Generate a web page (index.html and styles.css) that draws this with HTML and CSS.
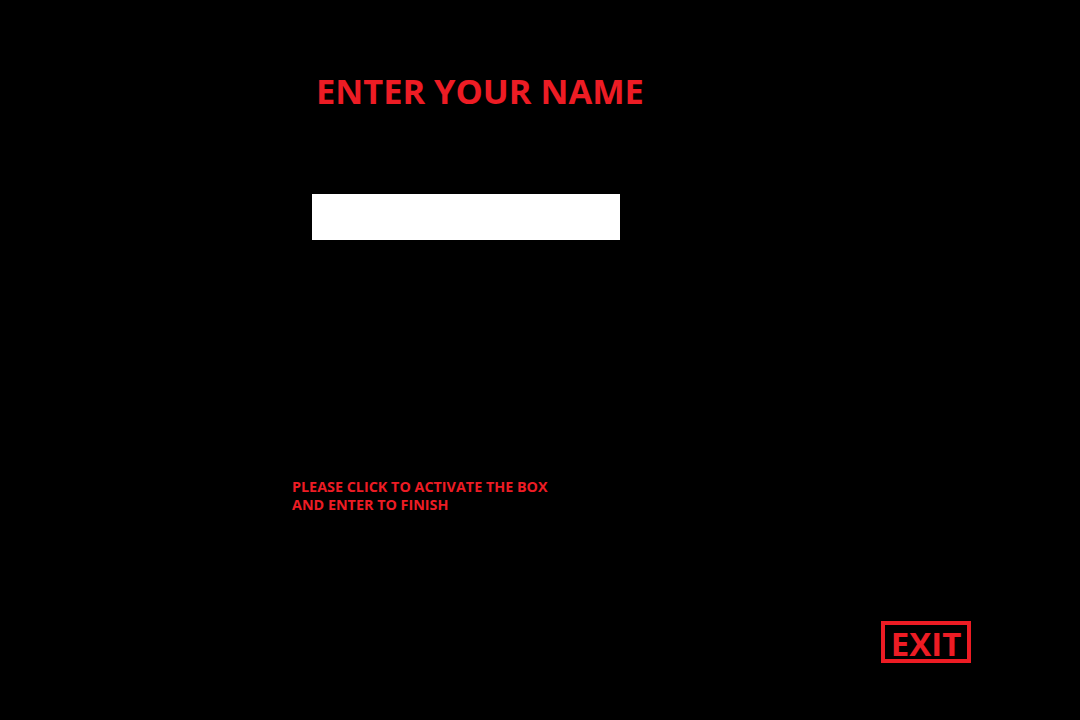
FILE: index.html
```html
<!DOCTYPE html>
<html>
<head>
<meta charset="utf-8">
<link rel="stylesheet" href="styles.css">
</head>
<body>
<div class="screen">
  <h1 class="title">ENTER YOUR NAME</h1>
  <input class="name-box" type="text" aria-label="Name">
  <p class="note">PLEASE CLICK TO ACTIVATE THE BOX<br>AND ENTER TO FINISH</p>
  <div class="footer">
    <button class="exit">EXIT</button>
  </div>
</div>
</body>
</html>
```

FILE: styles.css
```css
html, body {
  margin: 0;
  padding: 0;
  background: #000;
}
.screen {
  width: 1080px;
  height: 720px;
  display: flex;
  flex-direction: column;
  align-items: flex-start;
  font-family: "Open Sans", "Liberation Sans", sans-serif;
  color: #ed1c24;
  box-sizing: border-box;
}
.title {
  margin: 74px 0 0 316px;
  font-size: 34.4px;
  line-height: 34px;
  font-weight: 700;
}
.name-box {
  margin: 86px 0 0 312px;
  width: 308px;
  height: 46px;
  border: 0;
  padding: 0;
  background: #fff;
  outline: none;
}
.note {
  margin: 238px 0 0 292px;
  font-size: 14.35px;
  line-height: 18px;
  font-weight: 700;
}
.footer {
  align-self: stretch;
  display: flex;
  justify-content: flex-end;
  margin-top: 107px;
  padding-right: 109px;
}
.exit {
  width: 90px;
  height: 42px;
  box-sizing: border-box;
  border: 4px solid #ed1c24;
  background: transparent;
  color: #ed1c24;
  font-family: "Open Sans", "Liberation Sans", sans-serif;
  font-size: 33px;
  font-weight: 700;
  line-height: 1;
  padding: 2px 0 0;
  display: flex;
  align-items: center;
  justify-content: center;
}
```
